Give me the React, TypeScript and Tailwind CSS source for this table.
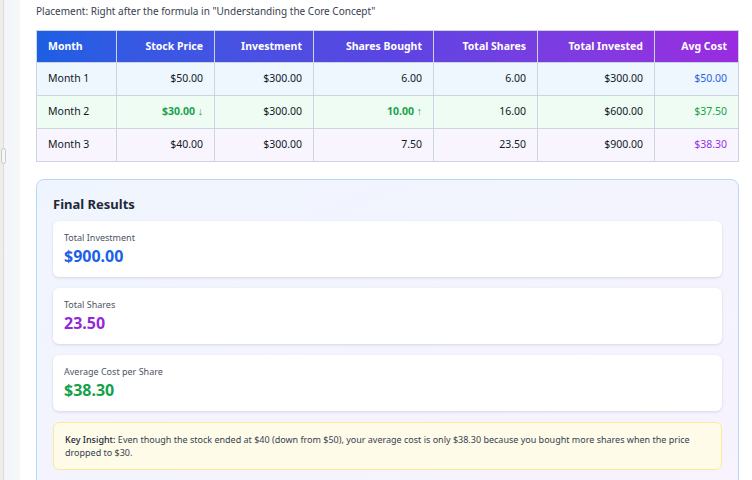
import React from "react";

const cols = [
  { label: "Month", w: "w-[80px]", left: true },
  { label: "Stock Price", w: "w-[98px]" },
  { label: "Investment", w: "w-[99px]" },
  { label: "Shares Bought", w: "w-[120px]" },
  { label: "Total Shares", w: "w-[104px]" },
  { label: "Total Invested", w: "w-[117px]" },
  { label: "Avg Cost", w: "w-[84px]" },
];

type Cell = { t: string; cls?: string };
const rows: { bg: string; cells: Cell[] }[] = [
  {
    bg: "bg-[#eef6fe]",
    cells: [
      { t: "Month 1" },
      { t: "$50.00" },
      { t: "$300.00" },
      { t: "6.00" },
      { t: "6.00" },
      { t: "$300.00" },
      { t: "$50.00", cls: "text-[#2b62e6]" },
    ],
  },
  {
    bg: "bg-[#effcf3]",
    cells: [
      { t: "Month 2" },
      { t: "$30.00 ↓", cls: "text-[#16a34a] font-bold" },
      { t: "$300.00" },
      { t: "10.00 ↑", cls: "text-[#16a34a] font-bold" },
      { t: "16.00" },
      { t: "$600.00" },
      { t: "$37.50", cls: "text-[#16a34a]" },
    ],
  },
  {
    bg: "bg-[#f9f5fe]",
    cells: [
      { t: "Month 3" },
      { t: "$40.00" },
      { t: "$300.00" },
      { t: "7.50" },
      { t: "23.50" },
      { t: "$900.00" },
      { t: "$38.30", cls: "text-[#9333ea]" },
    ],
  },
];

function ResultCard({ label, value, color }: { label: string; value: string; color: string }) {
  return (
    <div className="bg-white rounded-[6px] shadow-[0_1px_3px_rgba(0,0,0,0.12)] h-[56px] pl-[11px] pt-[11px]">
      <div className="text-[9px] leading-[12px] text-[#4b5563]">{label}</div>
      <div className={`mt-[2px] text-[16px] leading-[21px] font-bold ${color}`}>{value}</div>
    </div>
  );
}

export default function App() {
  return (
    <div
      className="flex w-[752px] h-[480px] overflow-hidden bg-white"
      style={{ fontFamily: '"Noto Sans", "Open Sans", sans-serif' }}
    >
      <div className="relative w-[20px] shrink-0 flex">
        <div className="w-[3px] bg-[#f0eee8]" />
        <div className="w-[1px] bg-[#dcdcdc]" />
        <div className="flex-1 bg-gradient-to-r from-[#f3f5f8] to-[#f7f8fa]" />
        <div className="absolute left-[1px] top-[148px] w-[5px] h-[16px] rounded-[3px] border border-[#c9c9c9] bg-[#f6f6f6]" />
      </div>
      <div className="flex-1 pl-[16px] pr-[13px]">
        <div className="pt-[4px] h-[30px] text-[10px] leading-[14px] text-[#374151]">
          Placement: Right after the formula in "Understanding the Core Concept"
        </div>
        <table className="border-collapse w-[703px] table-fixed">
          <thead>
            <tr className="bg-gradient-to-r from-[#1b5fe3] via-[#5a45e2] to-[#9a2be0] h-[32px]">
              {cols.map((c) => (
                <th
                  key={c.label}
                  className={`${c.w} border border-[#cbd5e1] px-[11px] text-[10.5px] font-bold text-white ${
                    c.left ? "text-left" : "text-right"
                  }`}
                >
                  {c.label}
                </th>
              ))}
            </tr>
          </thead>
          <tbody>
            {rows.map((r, i) => (
              <tr key={i} className={`${r.bg} h-[33px]`}>
                {r.cells.map((c, j) => (
                  <td
                    key={j}
                    className={`border border-[#cbd5e1] px-[11px] text-[10.5px] ${
                      j === 0 ? "text-left" : "text-right"
                    } ${c.cls ?? "text-[#111827]"}`}
                  >
                    {c.t}
                  </td>
                ))}
              </tr>
            ))}
          </tbody>
        </table>
        <div className="mt-[17px] w-[703px] rounded-[8px] border border-[#b9d8fb] bg-gradient-to-br from-[#eff5fe] to-[#f8f3fe] px-[16px] pt-[15px] pb-[16px]">
          <div className="text-[13px] leading-[18px] font-bold text-[#1f2937] mb-[8px]">Final Results</div>
          <div className="flex flex-col gap-[11px]">
            <ResultCard label="Total Investment" value="$900.00" color="text-[#1d5fe6]" />
            <ResultCard label="Total Shares" value="23.50" color="text-[#9428d9]" />
            <ResultCard label="Average Cost per Share" value="$38.30" color="text-[#15a04a]" />
            <div className="rounded-[6px] border border-[#fbe99a] bg-[#fefbe8] px-[11px] pt-[10px] pb-[10px] text-[9px] leading-[13px] text-[#374151]">
              <p>
                <strong className="font-medium text-[#1f2937]">Key Insight:</strong> Even though the stock ended at $40 (down from $50), your average cost is only $38.30 because you bought more shares when the price dropped to $30.
              </p>
            </div>
          </div>
        </div>
      </div>
    </div>
  );
}
